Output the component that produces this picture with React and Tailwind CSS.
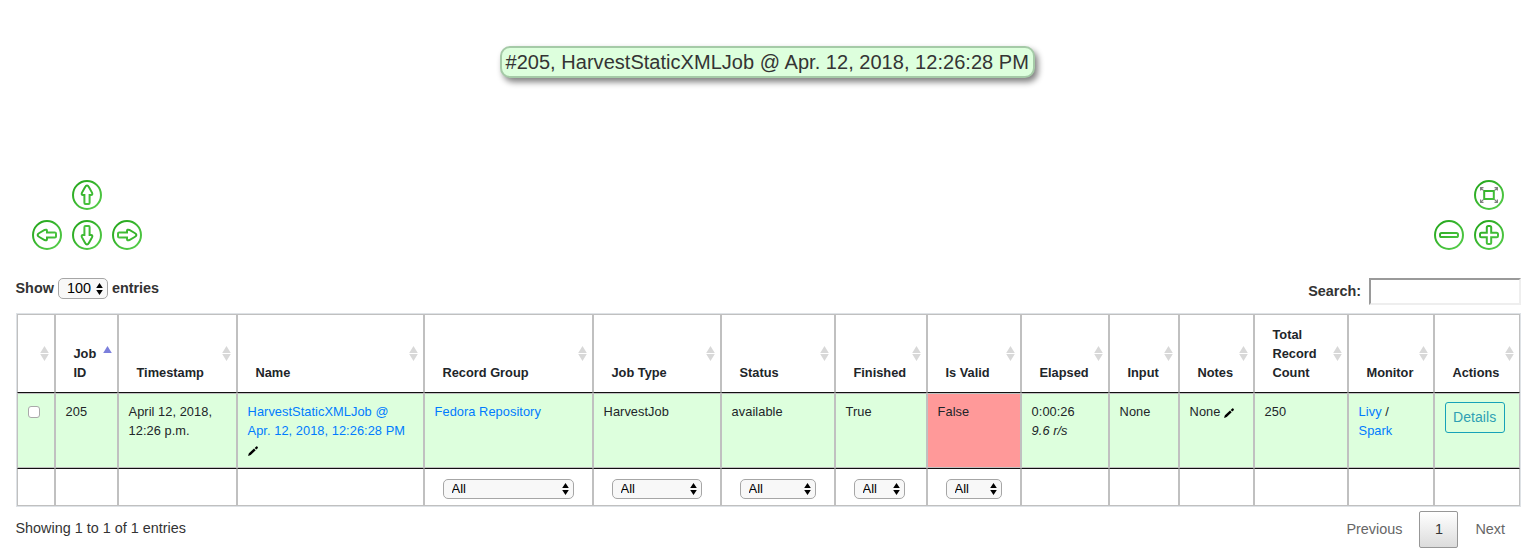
import React from "react";

const columns = [
  { w: 38, label: "" },
  { w: 63, label: "Job ID", sorted: true },
  { w: 119, label: "Timestamp" },
  { w: 187, label: "Name" },
  { w: 169, label: "Record Group", filter: "w-[131px]" },
  { w: 128, label: "Job Type", filter: "w-[90px]" },
  { w: 114, label: "Status", filter: "w-[76px]" },
  { w: 92, label: "Finished", filter: "w-[51px]" },
  { w: 94, label: "Is Valid", filter: "w-[56px]" },
  { w: 88, label: "Elapsed" },
  { w: 70, label: "Input" },
  { w: 75, label: "Notes" },
  { w: 94, label: "Total Record Count" },
  { w: 86, label: "Monitor" },
  { w: 86, label: "Actions" },
];

function SortIcon({ sorted }) {
  return (
    <svg className="absolute right-[5px] top-[31px]" width="9" height="15" viewBox="0 0 9 15">
      {sorted ? (
        <path d="M4.5 0L8.8 7H0.2Z" fill="#7b7fdc" />
      ) : (
        <path d="M4.5 0L8.8 7H0.2ZM0.2 8H8.8L4.5 15Z" fill="#d8d8d8" />
      )}
    </svg>
  );
}

function Select({ value, className }) {
  return (
    <span className={"inline-grid items-center " + className}>
      <select className="col-start-1 row-start-1 h-full w-full appearance-none rounded-[5px] border border-[#a6a6a6] bg-[#f8f8f8] pl-[7.5px] leading-none text-black">
        <option>{value}</option>
      </select>
      <svg className="col-start-1 row-start-1 mr-[5px] justify-self-end" width="7" height="12" viewBox="0 0 7 12">
        <path d="M3.5 0L6.8 5H0.2ZM0.2 7H6.8L3.5 12Z" fill="#000" />
      </svg>
    </span>
  );
}

function Pencil({ className }) {
  return (
    <svg className={className} width="10" height="10" viewBox="0 0 10 10">
      <path d="M0 10L0.9 7.2L6 2.6L7.7 4.3L2.7 9ZM6.7 2L8.2 0.6Q8.7 0.1 9.2 0.6L9.7 1.1Q10.1 1.7 9.7 2.2L8.3 3.6Z" fill="#000" />
    </svg>
  );
}

const arrow = "M15 5.6Q16 5.6 17 7.3L20 12.6Q21 15 19 15H17.6V22.8Q17.6 24 16.6 24H13.4Q12.4 24 12.4 22.8V15H11Q9 15 10 12.6L13 7.3Q14 5.6 15 5.6Z";

function NavButton({ kind }) {
  const turn = { up: 0, right: 90, down: 180, left: 270 }[kind];
  const id = "nav-" + kind;
  return (
    <svg width="30" height="30" viewBox="0 0 30 30" fill="none">
      <defs>
        <linearGradient id={id} gradientUnits="userSpaceOnUse" x1="5" y1="3" x2="25" y2="27">
          <stop offset="0" stopColor="#27a81e" />
          <stop offset="1" stopColor="#53cb48" />
        </linearGradient>
      </defs>
      <g stroke={"url(#" + id + ")"} strokeWidth="2">
        <circle cx="15" cy="15" r="14" />
        {turn !== undefined && <path d={arrow} transform={"rotate(" + turn + " 15 15)"} />}
        {kind === "minus" && <rect x="6" y="13" width="18" height="4" rx="1.6" />}
        {kind === "plus" && (
          <path
            d="M14.3 6H15.7Q17.2 6 17.2 7.5V12.8H22.5Q24 12.8 24 14.3V15.7Q24 17.2 22.5 17.2H17.2V22.5Q17.2 24 15.7 24H14.3Q12.8 24 12.8 22.5V17.2H7.5Q6 17.2 6 15.7V14.3Q6 12.8 7.5 12.8H12.8V7.5Q12.8 6 14.3 6Z"
          />
        )}
        {kind === "fit" && <rect x="10.2" y="11" width="9.6" height="8" />}
      </g>
      {kind === "fit" && (
        <path
          stroke="#808080"
          strokeWidth="1.2"
          d="M9.6 10.6L6.8 7.8M6.6 10.5V7.6H9.5M20.4 10.6L23.2 7.8M20.5 7.6H23.4V10.5M9.6 19.4L6.8 22.2M6.6 19.5V22.4H9.5M20.4 19.4L23.2 22.2M20.5 22.4H23.4V19.5"
        />
      )}
    </svg>
  );
}

const link = "text-[#007bff]";

const cells = [
  <input type="checkbox" className="mt-[4px] block h-3 w-3 appearance-none rounded-[3px] border border-[#a9a9a9] bg-white" />,
  "205",
  <>April 12, 2018,<br />12:26 p.m.</>,
  <>
    <a className={link}>HarvestStaticXMLJob @<br />Apr. 12, 2018, 12:26:28 PM</a>
    <Pencil className="mt-[6px] block" />
  </>,
  <a className={link}>Fedora Repository</a>,
  "HarvestJob",
  "available",
  "True",
  "False",
  <>0:00:26<br /><i>9.6 r/s</i></>,
  "None",
  <span className="flex items-center gap-1">None <Pencil className="mt-[3px] shrink-0" /></span>,
  "250",
  <><a className={link}>Livy</a> /<br /><a className={link}>Spark</a></>,
  <button className="block h-[31px] w-[60px] rounded-[3px] border border-[#17a2b8] text-[14px] text-[#2f9fb4]">Details</button>,
];

export default function App() {
  return (
    <div className="h-[556px] w-[1540px] overflow-hidden bg-white pl-4 pr-[19px] font-['Liberation_Sans',Arial,sans-serif] text-[#212529]">
      <header className="flex h-[278px] flex-col pt-[46px]">
        <h1 className="ml-[484px] h-8 w-[535px] whitespace-nowrap rounded-[10px] border-2 border-[#a5caa7] bg-[#ddffdd] pl-[3.5px] text-[20px] leading-[28px] tracking-[0.03px] text-[#343434] shadow-[3px_4px_6px_#808080]">
          #205, HarvestStaticXMLJob @ Apr. 12, 2018, 12:26:28 PM
        </h1>
        <nav className="mt-[102px] flex justify-between pl-4 pr-[17px]">
          <div className="grid grid-cols-3 gap-[10px]">
            <span /><NavButton kind="up" /><span />
            <NavButton kind="left" /><NavButton kind="down" /><NavButton kind="right" />
          </div>
          <div className="grid grid-cols-2 gap-[10px]">
            <span /><NavButton kind="fit" />
            <NavButton kind="minus" /><NavButton kind="plus" />
          </div>
        </nav>
      </header>

      <div className="flex h-[35px] items-start justify-between text-[14.4px] font-bold text-[#333]">
        <label className="-ml-[0.5px] flex h-[21px] items-center">
          Show <Select value="100" className="ml-[4.5px] mr-[3.5px] h-[21px] w-[50px] text-[14.4px] font-normal" /> entries
        </label>
        <label className="flex h-[27px] items-center gap-2">
          Search:
          <input className="h-[27px] w-[152px] border-2 border-b-[#eee] border-l-[#9a9a9a] border-r-[#eee] border-t-[#9a9a9a] bg-white" />
        </label>
      </div>

      <div className="w-[1505px] border border-[#dee2e6]">
        <table className="w-[1503px] table-fixed border-separate border-spacing-0 text-[12.8px] leading-[19px]">
          <colgroup>
            {columns.map((c, i) => <col key={i} style={{ width: c.w }} />)}
          </colgroup>
          <thead>
            <tr className="h-[79px]">
              {columns.map((c, i) => (
                <th key={i} className="relative border border-[#c0c0c0] border-b-[#111] pb-[10px] pl-[17.5px] pr-[14px] pt-0 text-left align-bottom">
                  {c.label}
                  <SortIcon sorted={c.sorted} />
                </th>
              ))}
            </tr>
          </thead>
          <tbody>
            <tr className="h-[75px]">
              {cells.map((cell, i) => (
                <td
                  key={i}
                  className={"whitespace-nowrap border border-[#c0c0c0] pb-0 pl-[9.6px] pr-0 pt-[8px] align-top tracking-[0.06px] " + (i === 8 ? "bg-[#ff9999]" : "bg-[#ddffdd]")}
                >
                  {cell}
                </td>
              ))}
            </tr>
          </tbody>
          <tfoot>
            <tr className="h-[38px]">
              {columns.map((c, i) => (
                <td key={i} className="border border-[#c0c0c0] border-t-[#111] py-0 pl-[18px] pr-0 align-middle">
                  {c.filter && <Select value="All" className={"mt-[3px] h-5 align-top text-[13px] " + c.filter} />}
                </td>
              ))}
            </tr>
          </tfoot>
        </table>
      </div>

      <footer className="flex justify-between pr-px pt-1 text-[14.4px] text-[#333]">
        <div className="-ml-[0.5px] h-[34px] leading-[34px]">Showing 1 to 1 of 1 entries</div>
        <div className="flex h-[37px] items-center text-[#666]">
          <a className="mr-[17px]">Previous</a>
          <a className="flex h-[37px] w-[39px] items-center justify-center rounded-[2px] border border-[#979797] bg-linear-to-b from-white to-[#dcdcdc] text-[#333]">1</a>
          <a className="ml-[17px] mr-[15px]">Next</a>
        </div>
      </footer>
    </div>
  );
}
